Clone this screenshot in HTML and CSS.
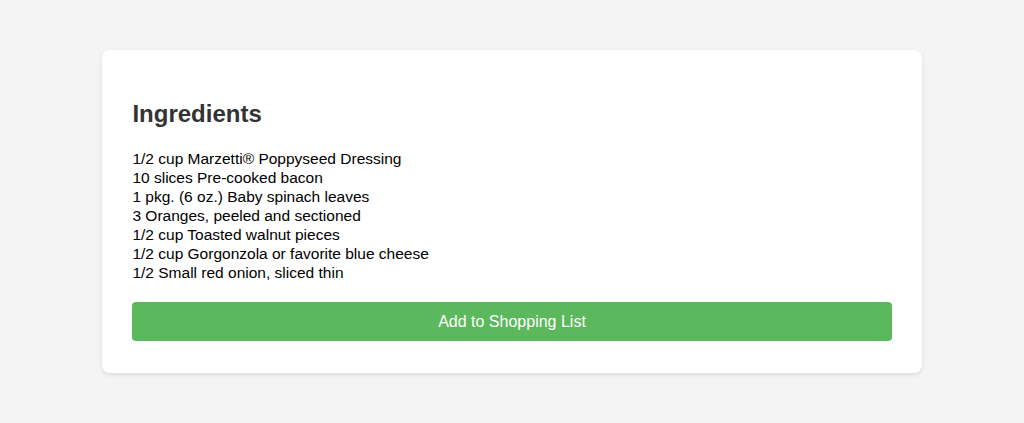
FILE: index.html
```html
<!DOCTYPE html>
<html>
<head>
<meta charset="utf-8">
<link rel="stylesheet" href="styles.css">
</head>
<body>
<div class="card">
  <h2 class="title">Ingredients</h2>
  <ul class="ingredients">
    <li>1/2 cup Marzetti® Poppyseed Dressing</li>
    <li>10 slices Pre-cooked bacon</li>
    <li>1 pkg. (6 oz.) Baby spinach leaves</li>
    <li>3 Oranges, peeled and sectioned</li>
    <li>1/2 cup Toasted walnut pieces</li>
    <li>1/2 cup Gorgonzola or favorite blue cheese</li>
    <li>1/2 Small red onion, sliced thin</li>
  </ul>
  <button class="add-btn">Add to Shopping List</button>
</div>
</body>
</html>
```
FILE: styles.css
```css
html, body {
  margin: 0;
  padding: 0;
}
body {
  background: #f4f4f4;
  font-family: "Liberation Sans", Arial, sans-serif;
  color: #000;
}
.card {
  width: 80%;
  margin: 50px auto;
  padding: 30px;
  box-sizing: border-box;
  background: #fff;
  border-radius: 8px;
  box-shadow: 0 2px 4px rgba(0, 0, 0, 0.1);
}
.title {
  font-size: 24px;
  font-weight: bold;
  color: #333;
  margin: 20px 0 21px;
}
.ingredients {
  list-style: none;
  margin: 0;
  padding: 0;
  font-size: 15.5px;
  line-height: 19px;
}
.add-btn {
  display: block;
  width: 100%;
  margin: 20px 0 2px;
  padding: 10px;
  font-family: "Liberation Sans", Arial, sans-serif;
  font-size: 16px;
  line-height: 19px;
  color: #fff;
  background: #5cb85c;
  border: none;
  border-radius: 4px;
}
```
